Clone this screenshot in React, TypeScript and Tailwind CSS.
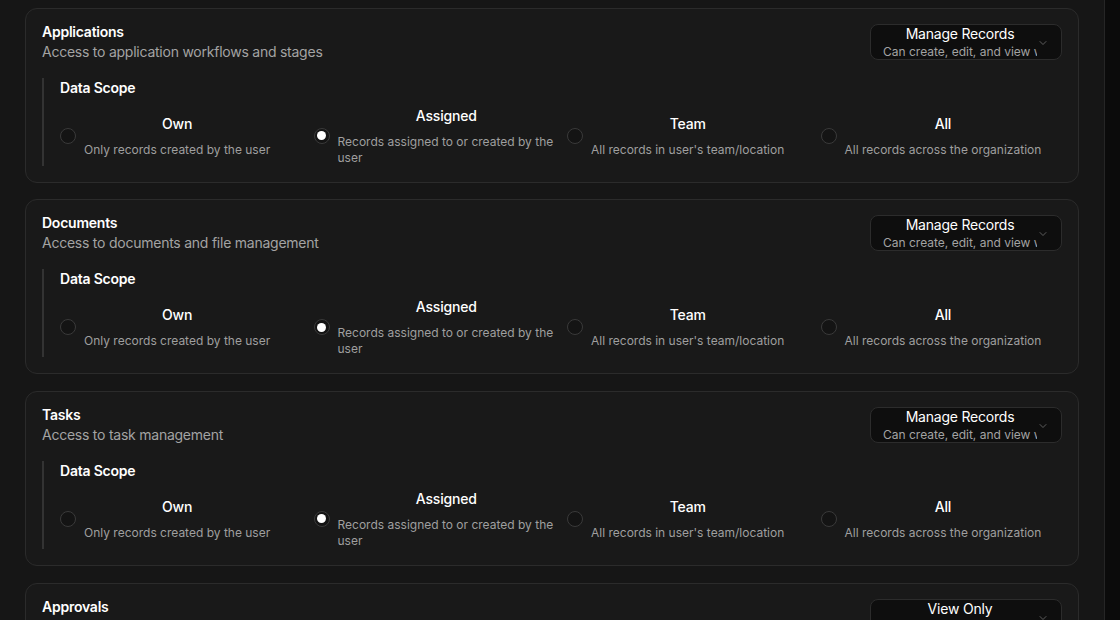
import React from 'react';
import { ChevronDown } from 'lucide-react';

type ScopeOption = { id: string; label: string; description: string };

const scopeOptions: ScopeOption[] = [
  { id: 'own', label: 'Own', description: 'Only records created by the user' },
  { id: 'assigned', label: 'Assigned', description: 'Records assigned to or created by the user' },
  { id: 'team', label: 'Team', description: "All records in user's team/location" },
  { id: 'all', label: 'All', description: 'All records across the organization' },
];

type Module = {
  name: string;
  description: string;
  access: string;
  accessHint: string;
  scope: string;
};

const modules: Module[] = [
  {
    name: 'Applications',
    description: 'Access to application workflows and stages',
    access: 'Manage Records',
    accessHint: 'Can create, edit, and view workflows',
    scope: 'assigned',
  },
  {
    name: 'Documents',
    description: 'Access to documents and file management',
    access: 'Manage Records',
    accessHint: 'Can create, edit, and view workflows',
    scope: 'assigned',
  },
  {
    name: 'Tasks',
    description: 'Access to task management',
    access: 'Manage Records',
    accessHint: 'Can create, edit, and view workflows',
    scope: 'assigned',
  },
  {
    name: 'Approvals',
    description: 'Access to approval requests and decisions',
    access: 'View Only',
    accessHint: 'Can view records only',
    scope: 'assigned',
  },
];

const Radio = ({ checked }: { checked: boolean }) => (
  <span className="flex h-4 w-4 shrink-0 items-center justify-center rounded-full border border-[#3a3a3a] bg-[#141414]">
    {checked && <span className="h-[9px] w-[9px] rounded-full bg-white" />}
  </span>
);

const AccessSelect = ({ label, hint }: { label: string; hint: string }) => (
  <button className="flex h-9 w-48 shrink-0 items-center rounded-lg border border-[#2c2c2c] bg-[#0e0e0e] pl-3 pr-3 text-left">
    <div className="min-w-0 flex-1 overflow-hidden">
      <div className="text-center text-sm leading-5 tracking-[-0.015em] text-white">{label}</div>
      <div className="whitespace-nowrap text-xs leading-4 text-[#a3a3a3]">{hint}</div>
    </div>
    <ChevronDown className="mt-0.5 h-3 w-3 shrink-0 text-[#777]" strokeWidth={1.5} />
  </button>
);

const ModuleCard = ({ mod }: { mod: Module }) => (
  <div className="rounded-xl border border-[#2b2b2b] bg-[#191919] px-4 pb-4 pt-[13px]">
    {/* Header */}
    <div className="flex items-center justify-between">
      <div className="tracking-[-0.015em]">
        <h3 className="text-sm font-semibold leading-5 text-white">{mod.name}</h3>
        <p className="text-sm leading-5 text-[#a3a3a3]">{mod.description}</p>
      </div>
      <AccessSelect label={mod.access} hint={mod.accessHint} />
    </div>

    {/* Data scope */}
    <div className="mt-4 border-l-2 border-[#333] pl-4">
      <div className="text-sm font-semibold leading-5 tracking-[-0.015em] text-white">Data Scope</div>
      <div className="mt-2 grid grid-cols-4 items-center gap-3">
        {scopeOptions.map((opt) => (
          <label key={opt.id} className="flex items-center gap-2">
            <Radio checked={mod.scope === opt.id} />
            <div className="min-w-0">
              <div className="text-center text-sm font-medium leading-5 tracking-[-0.015em] text-white">
                {opt.label}
              </div>
              <div className="mt-2 text-xs leading-4 text-[#9f9f9f]">{opt.description}</div>
            </div>
          </label>
        ))}
      </div>
    </div>
  </div>
);

export default function App() {
  return (
    <div
      className="flex h-[620px] w-[1120px] overflow-hidden bg-[#161616]"
      style={{ fontFamily: 'Inter, "Noto Sans", sans-serif' }}
    >
      <div className="flex min-w-0 flex-1 flex-col gap-[16.67px] px-[25px] pt-[7.67px]">
        {modules.map((m) => (
          <ModuleCard key={m.name} mod={m} />
        ))}
      </div>
      <div className="w-4 shrink-0 border-l border-[#262626] bg-[#0b0b0b]" />
    </div>
  );
}
